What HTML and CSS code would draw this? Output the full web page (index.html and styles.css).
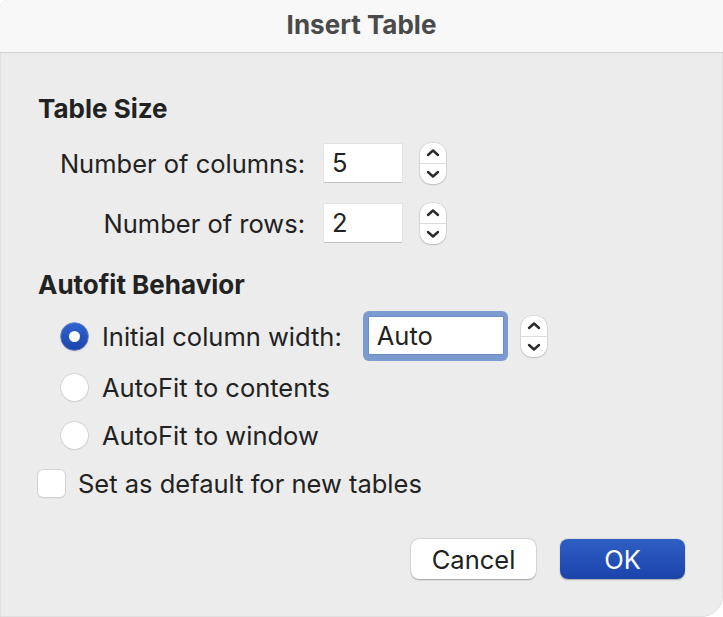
FILE: index.html
```html
<!DOCTYPE html>
<html lang="en">
<head>
<meta charset="utf-8">
<title>Insert Table</title>
<link rel="stylesheet" href="styles.css">
</head>
<body>
<div class="window">
  <div class="titlebar"><span class="title">Insert Table</span></div>
  <div class="content">
    <div class="heading">Table Size</div>
    <div class="size-grid">
      <label class="field-label">Number of columns:</label>
      <div class="textbox">5</div>
      <div class="stepper">
        <svg class="chev" width="14" height="9" viewBox="0 0 14 9"><path d="M2 7 L7 2.5 L12 7" /></svg>
        <span class="divider"></span>
        <svg class="chev" width="14" height="9" viewBox="0 0 14 9"><path d="M2 2 L7 6.5 L12 2" /></svg>
      </div>
      <label class="field-label">Number of rows:</label>
      <div class="textbox">2</div>
      <div class="stepper">
        <svg class="chev" width="14" height="9" viewBox="0 0 14 9"><path d="M2 7 L7 2.5 L12 7" /></svg>
        <span class="divider"></span>
        <svg class="chev" width="14" height="9" viewBox="0 0 14 9"><path d="M2 2 L7 6.5 L12 2" /></svg>
      </div>
    </div>

    <div class="heading heading-2">Autofit Behavior</div>
    <div class="options">
      <div class="option option-first">
        <span class="radio radio-on"><span class="dot"></span></span>
        <span class="option-text">Initial column width:</span>
        <div class="focus-ring"><div class="textbox textbox-wide">Auto</div></div>
        <div class="stepper">
          <svg class="chev" width="14" height="9" viewBox="0 0 14 9"><path d="M2 7 L7 2.5 L12 7" /></svg>
          <span class="divider"></span>
          <svg class="chev" width="14" height="9" viewBox="0 0 14 9"><path d="M2 2 L7 6.5 L12 2" /></svg>
        </div>
      </div>
      <div class="option">
        <span class="radio"></span>
        <span class="option-text">AutoFit to contents</span>
      </div>
      <div class="option">
        <span class="radio"></span>
        <span class="option-text">AutoFit to window</span>
      </div>
      <div class="check-row">
        <span class="checkbox"></span>
        <span class="option-text">Set as default for new tables</span>
      </div>
    </div>

    <div class="buttons">
      <button class="btn btn-cancel">Cancel</button>
      <button class="btn btn-ok">OK</button>
    </div>
  </div>
</div>
</body>
</html>
```

FILE: styles.css
```css
* { box-sizing: border-box; }
html, body {
  margin: 0;
  padding: 0;
  width: 723px;
  height: 617px;
  background: #ffffff;
  overflow: hidden;
}
body {
  font-family: "Inter", "Liberation Sans", sans-serif;
  color: #222222;
}
.window {
  width: 723px;
  height: 617px;
  background: #ececec;
  border-top-left-radius: 8px;
  border-bottom-right-radius: 22px;
  overflow: hidden;
  display: flex;
  flex-direction: column;
  box-shadow: inset 0 0 0 0.5px #d4d4d4;
}
.titlebar {
  height: 53px;
  background: #f8f8f8;
  border-bottom: 1px solid #cfcfcf;
  display: flex;
  align-items: center;
  justify-content: center;
  flex-shrink: 0;
}
.title {
  font-weight: 700;
  font-size: 26px;
  color: #4a4a4a;
  margin-top: -3px;
}
.content {
  padding: 41px 38px 0 38px;
  display: flex;
  flex-direction: column;
}
.heading {
  font-weight: 700;
  font-size: 26px;
  line-height: 30px;
  height: 30px;
}
.heading-2 {
  margin-top: 26px;
}
.size-grid {
  display: grid;
  grid-template-columns: 268px 78px 26px;
  column-gap: 18px;
  row-gap: 19px;
  align-items: center;
  margin-top: 19px;
}
.field-label {
  text-align: right;
  font-size: 25.5px;
  margin-right: 1px;
}
.textbox {
  height: 38px;
  width: 78px;
  background: #ffffff;
  font-size: 25.5px;
  line-height: 38px;
  padding-left: 8px;
  box-shadow: 0 1px 0 #c2c2c2, 0 0 0 0.6px #dcdcdc;
  margin-bottom: 1px;
}
.stepper {
  width: 26px;
  height: 41px;
  background: #ffffff;
  border-radius: 11px;
  box-shadow: 0 0.5px 1.5px rgba(0,0,0,0.28), 0 0 0 0.5px rgba(0,0,0,0.08);
  display: flex;
  flex-direction: column;
  align-items: center;
  justify-content: space-between;
  padding: 5px 0 5px;
}
.divider {
  display: block;
  width: 100%;
  height: 1px;
  background: #dcdcdc;
}
.chev path {
  fill: none;
  stroke: #2a2a2a;
  stroke-width: 2.4;
  stroke-linecap: round;
  stroke-linejoin: round;
}
.options {
  display: flex;
  flex-direction: column;
  margin-top: 11px;
}
.option {
  display: flex;
  align-items: center;
  height: 48px;
  padding-left: 23px;
}
.option-first {
  height: 50px;
  margin-bottom: 2px;
}
.radio {
  width: 27px;
  height: 27px;
  border-radius: 50%;
  background: #ffffff;
  box-shadow: 0 0 0 0.8px #cdcdcd, 0 1px 1.5px rgba(0,0,0,0.12);
  flex-shrink: 0;
  display: flex;
  align-items: center;
  justify-content: center;
}
.radio-on {
  background: linear-gradient(#2f63d0, #1c46ad);
  box-shadow: 0 0 0 0.5px #1b43a6, 0 1px 2px rgba(0,0,0,0.18);
}
.dot {
  width: 11px;
  height: 11px;
  border-radius: 50%;
  background: #ffffff;
}
.option-text {
  font-size: 25.5px;
  margin-left: 14px;
  white-space: nowrap;
}
.focus-ring {
  margin-left: 21px;
  width: 145px;
  height: 50px;
  padding: 6px 5px 7px 6px;
  background: #7b9bd0;
  border-radius: 6px;
}
.textbox-wide {
  width: 100%;
  height: 37px;
  line-height: 37px;
  box-shadow: 0 0 0 0.5px #5f7fb8;
  margin: 0;
}
.option-first .stepper {
  margin-left: 13px;
}
.check-row {
  display: flex;
  align-items: center;
  height: 48px;
}
.checkbox {
  width: 27px;
  height: 27px;
  border-radius: 5px;
  background: #ffffff;
  box-shadow: 0 0 0 0.8px #cdcdcd, 0 1px 1.5px rgba(0,0,0,0.12);
  flex-shrink: 0;
}
.check-row .option-text {
  margin-left: 13px;
}
.buttons {
  display: flex;
  justify-content: flex-end;
  gap: 24px;
  margin-top: 32px;
}
.btn {
  font-family: inherit;
  font-size: 25.5px;
  height: 40px;
  width: 125px;
  border: none;
  border-radius: 8px;
  padding: 0;
  margin: 0;
}
.btn-cancel {
  background: #ffffff;
  color: #222222;
  box-shadow: 0 0.5px 1.5px rgba(0,0,0,0.3), 0 0 0 0.5px rgba(0,0,0,0.08);
}
.btn-ok {
  background: linear-gradient(#2f5fc4, #1b44ab);
  color: #ffffff;
  box-shadow: 0 0.5px 1.5px rgba(0,0,0,0.3);
}
```
